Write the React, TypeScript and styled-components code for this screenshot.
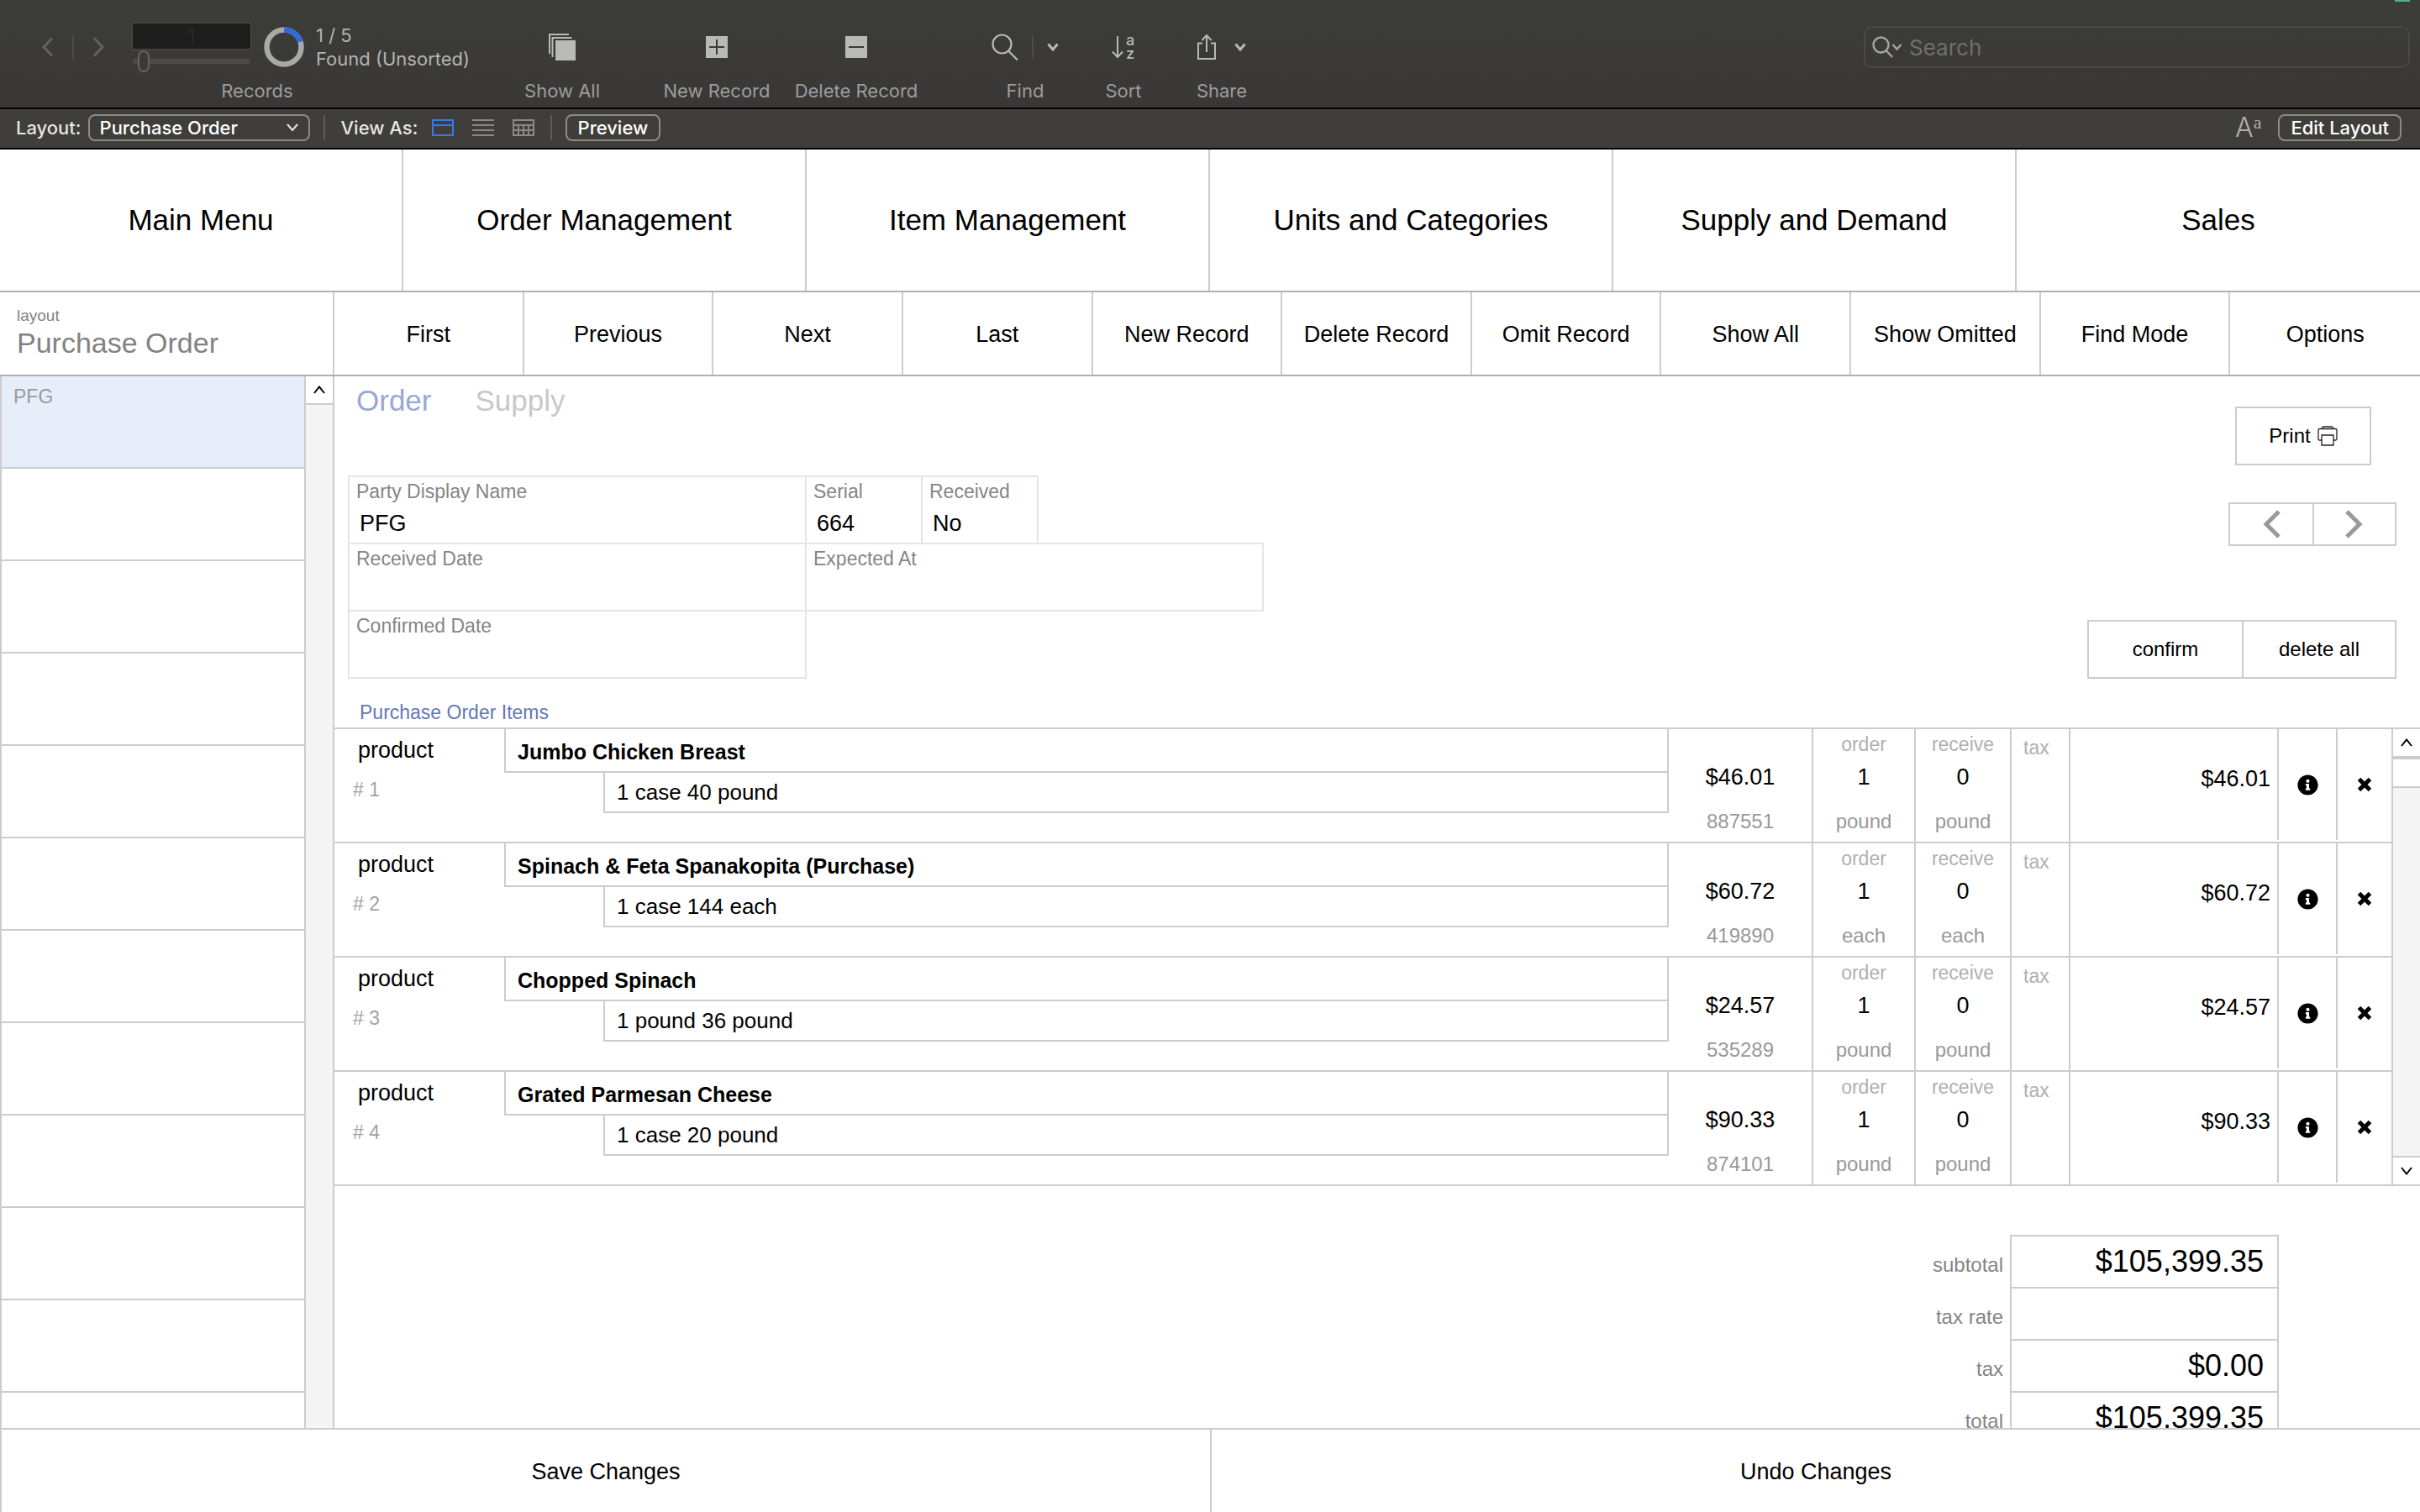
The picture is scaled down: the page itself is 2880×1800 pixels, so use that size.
import React from "react";
import styled, { createGlobalStyle } from "styled-components";
import { FaInfoCircle } from "react-icons/fa";

const ui = `Inter, Roboto, "Liberation Sans", sans-serif`;
const body = `"Liberation Sans", Arial, sans-serif`;
const line = "#cccccc";
const softLine = "#e5e5e5";
const strongLine = "#b0b0b0";

const GlobalStyle = createGlobalStyle`
  *, *::before, *::after { box-sizing: border-box; }
  body { margin: 0; background: #fff; color: #000; font-family: ${body}; }
  button, input, select { font: inherit; color: inherit; background: none; border: 0; border-radius: 0; padding: 0; margin: 0; outline: 0; min-width: 0; }
  button { cursor: pointer; white-space: nowrap; }
  svg { display: block; flex: none; }
`;

const Page = styled.div`
  display: flex;
  flex-direction: column;
  height: 100vh;
  overflow: hidden;
`;

/* ---------- application toolbar ---------- */

const Toolbar = styled.header`
  position: relative;
  display: flex;
  align-items: flex-start;
  padding: 26px 12px 6px 50px;
  background: linear-gradient(#3c3c39, #393836);
  border-bottom: 2px solid #000;
  font-family: ${ui};
  color: #9d9d9b;
`;

const CameraLight = styled.i`
  position: absolute;
  top: 0;
  right: 12px;
  width: 18px;
  height: 2px;
  background: #55b083;
`;

const ToolGroup = styled.div<{ $width: number; $before?: number }>`
  display: flex;
  flex-direction: column;
  align-items: center;
  gap: 8px;
  width: ${(p) => p.$width}px;
  margin-left: ${(p) => p.$before ?? 0}px;
`;

const ToolIcons = styled.div<{ $gap?: number }>`
  display: flex;
  align-items: center;
  justify-content: center;
  gap: ${(p) => p.$gap ?? 0}px;
  height: 60px;
  color: #b9b9b7;
`;

const ToolLabel = styled.span`
  font-size: 22px;
  line-height: 28px;
  white-space: nowrap;
`;

const RecordTools = styled(ToolIcons)`
  width: 100%;
  justify-content: flex-start;
`;

const StepButton = styled.button`
  color: #63625f;
`;

const StepRule = styled.i<{ $space?: number }>`
  width: 2px;
  height: 28px;
  margin: 0 ${(p) => p.$space ?? 0}px;
  background: #4d4c4a;
`;

const RecordPicker = styled.div`
  display: flex;
  flex-direction: column;
  width: 144px;
  margin-left: 32px;
`;

const RecordNumber = styled.input`
  height: 34px;
  background: #1e1e1e;
  border: 2px solid #434240;
  text-align: center;
  font-size: 22px;
  color: #2a2a2a;
`;

const RecordSlider = styled.input`
  appearance: none;
  height: 26px;
  margin: 0 2px;
  &::-webkit-slider-runnable-track {
    height: 6px;
    border-radius: 3px;
    background: #4c4b49;
  }
  &::-webkit-slider-thumb {
    appearance: none;
    width: 14px;
    height: 26px;
    margin-top: -10px;
    border: 2px solid #656462;
    border-radius: 7px;
    background: #3b3a38;
  }
`;

const FoundCount = styled.div`
  margin-left: 14px;
  font-size: 22px;
  line-height: 28px;
  white-space: nowrap;
  color: #b4b4b2;
`;

const Donut = styled.svg`
  margin-left: 14px;
`;

const SortLetters = styled.span`
  width: 12px;
  font-size: 18px;
  line-height: 16px;
  font-weight: 500;
  white-space: normal;
`;

const SearchBox = styled.label`
  display: flex;
  align-items: center;
  width: 650px;
  height: 50px;
  margin: 5px 0 5px auto;
  padding: 0 8px;
  gap: 8px;
  border: 2px solid #4a4947;
  border-radius: 10px;
  color: #a5a5a3;
`;

const SearchInput = styled.input`
  flex: 1;
  font-size: 26px;
  &::placeholder { color: #71706e; opacity: 1; }
`;

/* ---------- status bar ---------- */

const StatusBar = styled.div`
  display: flex;
  align-items: center;
  gap: 16px;
  height: 48px;
  padding: 0 22px 2px 19px;
  background: #3f3e3a;
  border-bottom: 2px solid #000;
  font-family: ${ui};
  font-size: 22px;
  font-weight: 500;
  color: #e6e6e4;
`;

const LayoutPicker = styled.label`
  display: flex;
  align-items: center;
  gap: 8px;
  white-space: nowrap;
`;

const SelectFrame = styled.span`
  display: grid;
  align-items: center;
  width: 264px;
  & > * { grid-area: 1 / 1; }
  & > svg { justify-self: end; margin-right: 14px; pointer-events: none; }
`;

const Select = styled.select`
  appearance: none;
  width: 100%;
  height: 32px;
  padding: 0 12px;
  border: 2px solid #8c8b88;
  border-radius: 8px;
  color: #fff;
`;

const BarRule = styled.i`
  width: 2px;
  height: 30px;
  background: #5d5c59;
`;

const ViewAs = styled.div`
  display: flex;
  align-items: center;
  gap: 22px;
  padding: 0 3px;
`;

const ViewAsLabel = styled.span`
  width: 86px;
  white-space: nowrap;
`;

const ViewButton = styled.button<{ $on?: boolean }>`
  color: ${(p) => (p.$on ? "#3478f6" : "#8a8986")};
`;

const BarButton = styled.button`
  height: 32px;
  padding: 0 13px;
  border: 2px solid #8c8b88;
  border-radius: 8px;
  color: #fff;
`;

const BarEnd = styled.div`
  display: flex;
  align-items: center;
  gap: 20px;
  margin-left: auto;
`;

const TextSizeButton = styled.button`
  display: flex;
  align-items: flex-start;
  height: 32px;
  color: #b0afac;
  font-size: 32px;
  line-height: 32px;
  font-weight: 300;
  & > small {
    font: 22px/20px "Liberation Serif", serif;
  }
`;

/* ---------- navigation ---------- */

const MainNav = styled.nav`
  display: grid;
  grid-template-columns: repeat(6, 1fr);
  height: 170px;
  border-bottom: 2px solid ${strongLine};
`;

const NavButton = styled.button`
  font-size: 35px;
  border-right: 2px solid ${line};
  &:last-child { border-right: 0; }
`;

const ActionRow = styled.div`
  display: flex;
  height: 100px;
  border-bottom: 2px solid ${strongLine};
`;

const LayoutTitle = styled.div`
  width: 398px;
  padding: 16px 20px 0;
  border-right: 2px solid ${line};
  color: #828282;
`;

const LayoutCaption = styled.div`
  font-size: 19px;
  line-height: 24px;
`;

const LayoutName = styled.h1`
  margin: 0;
  font-size: 34px;
  line-height: 40px;
  font-weight: 400;
`;

const Actions = styled.div`
  flex: 1;
  display: grid;
  grid-template-columns: repeat(11, 1fr);
`;

const ActionButton = styled(NavButton)`
  padding-top: 2px;
  font-size: 27px;
`;

/* ---------- body ---------- */

const Body = styled.div`
  flex: 1;
  display: flex;
  min-height: 0;
  overflow: hidden;
`;

const Sidebar = styled.aside`
  display: flex;
  width: 398px;
  border: 0 solid ${line};
  border-width: 0 2px;
`;

const OrderList = styled.ul`
  flex: 1;
  margin: 0;
  padding: 0;
  list-style: none;
  overflow: hidden;
`;

const OrderEntry = styled.li<{ $selected?: boolean }>`
  height: 110px;
  padding: 10px 14px;
  border-bottom: 2px solid ${line};
  background: ${(p) => (p.$selected ? "#e7eef9" : "#fff")};
  font-size: 23px;
  line-height: 28px;
  color: #999;
`;

const ScrollBar = styled.div<{ $closed?: boolean }>`
  display: flex;
  flex-direction: column;
  width: 34px;
  border-left: 2px solid ${line};
  border-bottom: ${(p) => (p.$closed ? 2 : 0)}px solid ${line};
  background: #f4f4f4;
`;

const ScrollButton = styled.button<{ $bottom?: boolean }>`
  display: grid;
  place-items: center;
  height: 34px;
  background: #fff;
  border: 0 solid ${line};
  ${(p) => (p.$bottom ? "margin-top: auto; border-top-width: 2px;" : "border-bottom-width: 2px;")}
`;

const ScrollThumb = styled.div`
  height: 36px;
  background: #fff;
  border: 2px solid ${line};
  border-width: 2px 0;
`;

const Main = styled.main`
  flex: 1;
  min-width: 0;
  overflow: hidden;
`;

const OrderHead = styled.section`
  display: flex;
  justify-content: space-between;
  padding-right: 28px;
`;

const Tabs = styled.div`
  display: flex;
  gap: 52px;
  padding: 9px 26px 69px;
`;

const Tab = styled.button<{ $on?: boolean }>`
  font-size: 35px;
  line-height: 40px;
  color: ${(p) => (p.$on ? "#98a8d4" : "#c8c8c8")};
`;

const FieldGrid = styled.div`
  padding: 0 0 0 16px;
`;

const FieldRow = styled.div`
  display: flex;
  & + & { margin-top: -2px; }
`;

const Field = styled.label<{ $narrow?: boolean }>`
  display: flex;
  flex-direction: column;
  width: ${(p) => (p.$narrow ? 140 : 546)}px;
  height: 82px;
  padding: 3px 8px 0;
  border: 2px solid ${softLine};
  font-size: 23px;
  line-height: 28px;
  color: #858585;
  & + & { margin-left: -2px; }
`;

const FieldValue = styled.input`
  flex: 1;
  padding: 0 4px;
  font-size: 27px;
  color: #000;
`;

const SectionTitle = styled.h2`
  margin: 0;
  padding: 26px 30px 4px;
  font-size: 23px;
  line-height: 28px;
  font-weight: 400;
  color: #6478b4;
`;

const HeadActions = styled.div`
  display: flex;
  flex-direction: column;
  align-items: flex-end;
  padding-top: 36px;
`;

const PrintButton = styled.button`
  display: flex;
  align-items: center;
  justify-content: center;
  gap: 8px;
  width: 162px;
  height: 70px;
  margin-right: 30px;
  border: 2px solid ${line};
  font-size: 24px;
`;

const ButtonPair = styled.div<{ $width: number; $height: number; $before: number }>`
  display: grid;
  grid-template-columns: 1fr 1fr;
  width: ${(p) => p.$width}px;
  height: ${(p) => p.$height}px;
  margin-top: ${(p) => p.$before}px;
  border: 2px solid ${line};
  font-size: 24px;
  & svg { color: #999; }
`;

const PairButton = styled.button`
  display: grid;
  place-items: center;
  & + & { border-left: 2px solid ${line}; }
`;

/* ---------- items portal ---------- */

const Portal = styled.section`
  display: flex;
  border-top: 2px solid ${line};
`;

const ItemTable = styled.table`
  flex: 1;
  width: 100%;
  table-layout: fixed;
  border-collapse: separate;
  border-spacing: 0;
`;

const Cell = styled.td<{ $rule?: boolean }>`
  height: 136px;
  padding: 0;
  vertical-align: top;
  border-bottom: 2px solid ${line};
  border-left: ${(p) => (p.$rule ? 2 : 0)}px solid ${line};
`;

const ProductKind = styled.div`
  padding: 7px 0 0 28px;
  font-size: 27px;
  line-height: 36px;
`;

const ProductIndex = styled.div`
  padding: 15px 0 0 22px;
  font-size: 23px;
  line-height: 28px;
  color: #a3a3a3;
`;

const ItemName = styled.input`
  display: block;
  width: 100%;
  height: 52px;
  padding: 4px 14px 0;
  border: 2px solid ${line};
  border-top: 0;
  font-size: 25px;
  font-weight: 700;
`;

const UnitWrap = styled.div`
  padding-left: 118px;
`;

const ItemUnit = styled.input`
  display: block;
  width: 100%;
  height: 48px;
  padding: 0 14px;
  border: 2px solid ${line};
  border-top: 0;
  font-size: 26px;
`;

const Stack = styled.div`
  display: grid;
  grid-template-rows: 34px 58px 28px;
  padding-top: 4px;
  justify-items: center;
`;

const StackLabel = styled.label`
  font-size: 23px;
  line-height: 28px;
  color: #b0b0b0;
`;

const StackValue = styled.input`
  width: 100%;
  height: 38px;
  font-size: 27px;
  text-align: center;
`;

const StackNote = styled.span`
  font-size: 24px;
  line-height: 28px;
  color: #999;
`;

const TaxLabel = styled.div`
  padding: 8px 14px;
  font-size: 23px;
  line-height: 28px;
  color: #b0b0b0;
`;

const LineTotal = styled.div`
  padding: 41px 8px 0 0;
  font-size: 27px;
  line-height: 36px;
  text-align: right;
`;

const IconButton = styled.button`
  display: grid;
  place-items: center;
  width: 100%;
  height: 132px;
  border-left: 2px solid ${line};
`;

/* ---------- totals and footer ---------- */

const Totals = styled.section`
  display: flex;
  flex-direction: column;
  align-items: flex-end;
  padding: 58px 168px 0 0;
`;

const TotalRow = styled.label`
  display: flex;
  align-items: baseline;
  gap: 8px;
  font-size: 24px;
  color: #858585;
`;

const TotalValue = styled.input`
  width: 320px;
  height: 62px;
  padding: 0 16px;
  border: 2px solid ${line};
  border-bottom: 0;
  font-size: 36px;
  text-align: right;
  color: #000;
`;

const Footer = styled.footer`
  display: grid;
  grid-template-columns: 1fr 1fr;
  height: 100px;
  border-top: 2px solid ${line};
`;

const FooterButton = styled.button`
  border-left: 2px solid ${line};
  padding-top: 2px;
  font-size: 27px;
`;

/* ---------- icons ---------- */

type ChevronProps = { points: string; width: number; height: number; stroke: number };
const Chevron = ({ points, width, height, stroke }: ChevronProps) => (
  <svg width={width} height={height} viewBox={`0 0 ${width} ${height}`} fill="none" stroke="currentColor" strokeWidth={stroke}>
    <polyline points={points} />
  </svg>
);

const DownMark = () => <Chevron points="1.5,1.5 7,8 12.5,1.5" width={14} height={10} stroke={3} />;

const ShowAllIcon = () => (
  <svg width="32" height="32" viewBox="0 0 32 32">
    <path d="M1 24V1h23M4.500 28V5h23" fill="none" stroke="currentColor" strokeWidth="2" />
    <rect x="8" y="8" width="24" height="24" fill="currentColor" />
  </svg>
);

const RecordIcon = ({ plus }: { plus?: boolean }) => (
  <svg width="26" height="26" viewBox="0 0 26 26">
    <rect width="26" height="26" fill="currentColor" />
    <path d={plus ? "M4 13h18M13 4v18" : "M4 13h18"} stroke="#3b3a38" strokeWidth="2" />
  </svg>
);

const FindIcon = () => (
  <svg width="32" height="32" viewBox="0 0 32 32" fill="none" stroke="currentColor" strokeWidth="2.200">
    <circle cx="12.500" cy="12.500" r="11" />
    <path d="M20 20.500L31 31.500" />
  </svg>
);

const SortArrow = () => (
  <svg width="14" height="28" viewBox="0 0 14 28" fill="none" stroke="currentColor" strokeWidth="2">
    <path d="M7 1v25M1 19.500l6 6.500 6-6.500" />
  </svg>
);

const ShareIcon = () => (
  <svg width="22" height="32" viewBox="0 0 22 32" fill="none" stroke="currentColor" strokeWidth="2">
    <path d="M6 11.500H1V30h20V11.500h-5M11 22V2M5.500 8L11 2l5.500 6" />
  </svg>
);

const SearchIcon = () => (
  <svg width="36" height="26" viewBox="0 0 36 26" fill="none" stroke="currentColor" strokeWidth="2.400">
    <circle cx="10.500" cy="10.500" r="9" />
    <path d="M17 17.500L24 25M24.500 10l5 5.500 5-5.500" />
  </svg>
);

const FormViewIcon = () => (
  <svg width="26" height="20" viewBox="0 0 26 20" fill="none" stroke="currentColor" strokeWidth="2">
    <path d="M1 1h24v18H1zM1 7h24" />
  </svg>
);

const ListViewIcon = () => (
  <svg width="26" height="20" viewBox="0 0 26 20" stroke="currentColor" strokeWidth="2">
    <path d="M0 1h26M0 7h26M0 13h26M0 19h26" />
  </svg>
);

const TableViewIcon = () => (
  <svg width="26" height="20" viewBox="0 0 26 20" fill="none" stroke="currentColor" strokeWidth="2">
    <path d="M1 1h24v18H1zM1 7h24M1 13h24M7 7v12M13 7v12M19 7v12" />
  </svg>
);

const PrinterIcon = () => (
  <svg width="24" height="24" viewBox="0 0 24 24" fill="none" stroke="#222" strokeWidth="1.300">
    <path d="M5 17H2.500Q1 17 1 15.500V5Q1 3.500 2.500 3.500h19Q23 3.500 23 5v10.500q0 1.500-1.500 1.500H19M5.500 3.500Q5.500 1 7 1h10q1.500 0 1.500 2.500M5 11h14v12H5z" />
  </svg>
);

const CrossIcon = () => (
  <svg width="18" height="18" viewBox="0 0 18 18" stroke="#000" strokeWidth="5">
    <path d="M2.500 2.500l13 13M15.500 2.500l-13 13" />
  </svg>
);

/* ---------- data ---------- */

const navItems = ["Main Menu", "Order Management", "Item Management", "Units and Categories", "Supply and Demand", "Sales"];
const actions = ["First", "Previous", "Next", "Last", "New Record", "Delete Record", "Omit Record", "Show All", "Show Omitted", "Find Mode", "Options"];
const orders = ["PFG", "", "", "", "", "", "", "", "", "", "", ""];
const items = [
  { name: "Jumbo Chicken Breast", unit: "1 case 40 pound", price: "$46.01", code: "887551", measure: "pound" },
  { name: "Spinach & Feta Spanakopita (Purchase)", unit: "1 case 144 each", price: "$60.72", code: "419890", measure: "each" },
  { name: "Chopped Spinach", unit: "1 pound 36 pound", price: "$24.57", code: "535289", measure: "pound" },
  { name: "Grated Parmesan Cheese", unit: "1 case 20 pound", price: "$90.33", code: "874101", measure: "pound" },
];
const totals = [
  ["subtotal", "$105,399.35"],
  ["tax rate", ""],
  ["tax", "$0.00"],
  ["total", "$105,399.35"],
];

const TextField = ({ label, value, narrow }: { label: string; value?: string; narrow?: boolean }) => (
  <Field $narrow={narrow}>
    {label}
    <FieldValue defaultValue={value} />
  </Field>
);

const Quantity = ({ id, label, value, measure }: { id: string; label: string; value: string; measure: string }) => (
  <Stack>
    <StackLabel htmlFor={id}>{label}</StackLabel>
    <StackValue id={id} defaultValue={value} />
    <StackNote>{measure}</StackNote>
  </Stack>
);

export default function App() {
  return (
    <Page>
      <GlobalStyle />
      <Toolbar>
        <CameraLight />
        <ToolGroup $width={512}>
          <RecordTools>
            <StepButton aria-label="Previous record">
              <Chevron points="12,1.5 2,12 12,22.5" width={14} height={24} stroke={3} />
            </StepButton>
            <StepRule $space={22} />
            <StepButton aria-label="Next record">
              <Chevron points="2,1.500 12,12 2,22.500" width={14} height={24} stroke={3} />
            </StepButton>
            <RecordPicker>
              <RecordNumber aria-label="Record number" defaultValue="1" />
              <RecordSlider type="range" aria-label="Record" min={1} max={21} defaultValue={2} />
            </RecordPicker>
            <Donut width="48" height="48" viewBox="0 0 48 48" fill="none" strokeWidth="6.500">
              <circle cx="24" cy="24" r="20.500" stroke="#a9a9a7" />
              <path d="M24 3.500A20.500 20.500 0 0 1 43.500 17.700" stroke="#2f6bd6" />
            </Donut>
            <FoundCount>
              1 / 5
              <br />
              Found (Unsorted)
            </FoundCount>
          </RecordTools>
          <ToolLabel>Records</ToolLabel>
        </ToolGroup>
        <ToolGroup as="button" $width={94} $before={60}>
          <ToolIcons><ShowAllIcon /></ToolIcons>
          <ToolLabel>Show All</ToolLabel>
        </ToolGroup>
        <ToolGroup as="button" $width={130} $before={72}>
          <ToolIcons><RecordIcon plus /></ToolIcons>
          <ToolLabel>New Record</ToolLabel>
        </ToolGroup>
        <ToolGroup as="button" $width={154} $before={24}>
          <ToolIcons><RecordIcon /></ToolIcons>
          <ToolLabel>Delete Record</ToolLabel>
        </ToolGroup>
        <ToolGroup as="button" $width={80} $before={84}>
          <ToolIcons>
            <FindIcon />
            <StepRule $space={16} />
            <DownMark />
          </ToolIcons>
          <ToolLabel>Find</ToolLabel>
        </ToolGroup>
        <ToolGroup as="button" $width={46} $before={54}>
          <ToolIcons $gap={2}>
            <SortArrow />
            <SortLetters>a z</SortLetters>
          </ToolIcons>
          <ToolLabel>Sort</ToolLabel>
        </ToolGroup>
        <ToolGroup as="button" $width={60} $before={64}>
          <ToolIcons $gap={22}>
            <ShareIcon />
            <DownMark />
          </ToolIcons>
          <ToolLabel>Share</ToolLabel>
        </ToolGroup>
        <SearchBox>
          <SearchIcon />
          <SearchInput type="text" placeholder="Search" aria-label="Search" />
        </SearchBox>
      </Toolbar>

      <StatusBar>
        <LayoutPicker>
          Layout:
          <SelectFrame>
            <Select defaultValue="Purchase Order">
              <option>Purchase Order</option>
            </Select>
            <Chevron points="1,1 7,8 13,1" width={14} height={10} stroke={2} />
          </SelectFrame>
        </LayoutPicker>
        <BarRule />
        <ViewAs>
          <ViewAsLabel>View As:</ViewAsLabel>
          <ViewButton $on aria-label="Form view"><FormViewIcon /></ViewButton>
          <ViewButton aria-label="List view"><ListViewIcon /></ViewButton>
          <ViewButton aria-label="Table view"><TableViewIcon /></ViewButton>
        </ViewAs>
        <BarRule />
        <BarButton>Preview</BarButton>
        <BarEnd>
          <TextSizeButton aria-label="Formatting">
            A<small>a</small>
          </TextSizeButton>
          <BarButton>Edit Layout</BarButton>
        </BarEnd>
      </StatusBar>

      <MainNav>
        {navItems.map((name) => <NavButton key={name}>{name}</NavButton>)}
      </MainNav>

      <ActionRow>
        <LayoutTitle>
          <LayoutCaption>layout</LayoutCaption>
          <LayoutName>Purchase Order</LayoutName>
        </LayoutTitle>
        <Actions>
          {actions.map((name) => <ActionButton key={name}>{name}</ActionButton>)}
        </Actions>
      </ActionRow>

      <Body>
        <Sidebar>
          <OrderList>
            {orders.map((name, i) => <OrderEntry key={i} $selected={i === 0}>{name}</OrderEntry>)}
          </OrderList>
          <ScrollBar>
            <ScrollButton aria-label="Scroll up">
              <Chevron points="1,9 7,1.500 13,9" width={14} height={10} stroke={2} />
            </ScrollButton>
          </ScrollBar>
        </Sidebar>

        <Main>
          <OrderHead>
            <div>
              <Tabs>
                <Tab $on>Order</Tab>
                <Tab>Supply</Tab>
              </Tabs>
              <FieldGrid>
                <FieldRow>
                  <TextField label="Party Display Name" value="PFG" />
                  <TextField label="Serial" value="664" narrow />
                  <TextField label="Received" value="No" narrow />
                </FieldRow>
                <FieldRow>
                  <TextField label="Received Date" />
                  <TextField label="Expected At" />
                </FieldRow>
                <FieldRow>
                  <TextField label="Confirmed Date" />
                </FieldRow>
              </FieldGrid>
              <SectionTitle>Purchase Order Items</SectionTitle>
            </div>
            <HeadActions>
              <PrintButton>
                Print
                <PrinterIcon />
              </PrintButton>
              <ButtonPair $width={200} $height={52} $before={44}>
                <PairButton aria-label="Previous order">
                  <Chevron points="20,2 5,17 20,32" width={22} height={34} stroke={5} />
                </PairButton>
                <PairButton aria-label="Next order">
                  <Chevron points="2,2 17,17 2,32" width={22} height={34} stroke={5} />
                </PairButton>
              </ButtonPair>
              <ButtonPair $width={368} $height={70} $before={88}>
                <PairButton>confirm</PairButton>
                <PairButton>delete all</PairButton>
              </ButtonPair>
            </HeadActions>
          </OrderHead>

          <Portal>
            <ItemTable aria-label="Purchase Order Items">
              <colgroup>
                <col width="202" />
                <col />
                <col width="170" />
                <col width="122" />
                <col width="114" />
                <col width="70" />
                <col width="248" />
                <col width="70" />
                <col width="66" />
              </colgroup>
              <tbody>
                {items.map((item, i) => (
                  <tr key={item.code}>
                    <Cell>
                      <ProductKind>product</ProductKind>
                      <ProductIndex># {i + 1}</ProductIndex>
                    </Cell>
                    <Cell>
                      <ItemName aria-label="Item name" defaultValue={item.name} />
                      <UnitWrap>
                        <ItemUnit aria-label="Unit" defaultValue={item.unit} />
                      </UnitWrap>
                    </Cell>
                    <Cell>
                      <Stack>
                        <span />
                        <StackValue aria-label="Price" defaultValue={item.price} />
                        <StackNote>{item.code}</StackNote>
                      </Stack>
                    </Cell>
                    <Cell $rule>
                      <Quantity id={`order-${i}`} label="order" value="1" measure={item.measure} />
                    </Cell>
                    <Cell $rule>
                      <Quantity id={`receive-${i}`} label="receive" value="0" measure={item.measure} />
                    </Cell>
                    <Cell $rule><TaxLabel>tax</TaxLabel></Cell>
                    <Cell $rule><LineTotal>{item.price}</LineTotal></Cell>
                    <Cell>
                      <IconButton aria-label="Item details"><FaInfoCircle size={25} /></IconButton>
                    </Cell>
                    <Cell>
                      <IconButton aria-label="Remove item"><CrossIcon /></IconButton>
                    </Cell>
                  </tr>
                ))}
              </tbody>
            </ItemTable>
            <ScrollBar $closed>
              <ScrollButton aria-label="Scroll items up">
                <Chevron points="1,9 7,1.500 13,9" width={14} height={10} stroke={2} />
              </ScrollButton>
              <ScrollThumb />
              <ScrollButton $bottom aria-label="Scroll items down">
                <Chevron points="1,1 7,8.500 13,1" width={14} height={10} stroke={2} />
              </ScrollButton>
            </ScrollBar>
          </Portal>

          <Totals>
            {totals.map(([label, value]) => (
              <TotalRow key={label}>
                {label}
                <TotalValue readOnly value={value} />
              </TotalRow>
            ))}
          </Totals>
        </Main>
      </Body>

      <Footer>
        <FooterButton>Save Changes</FooterButton>
        <FooterButton>Undo Changes</FooterButton>
      </Footer>
    </Page>
  );
}
